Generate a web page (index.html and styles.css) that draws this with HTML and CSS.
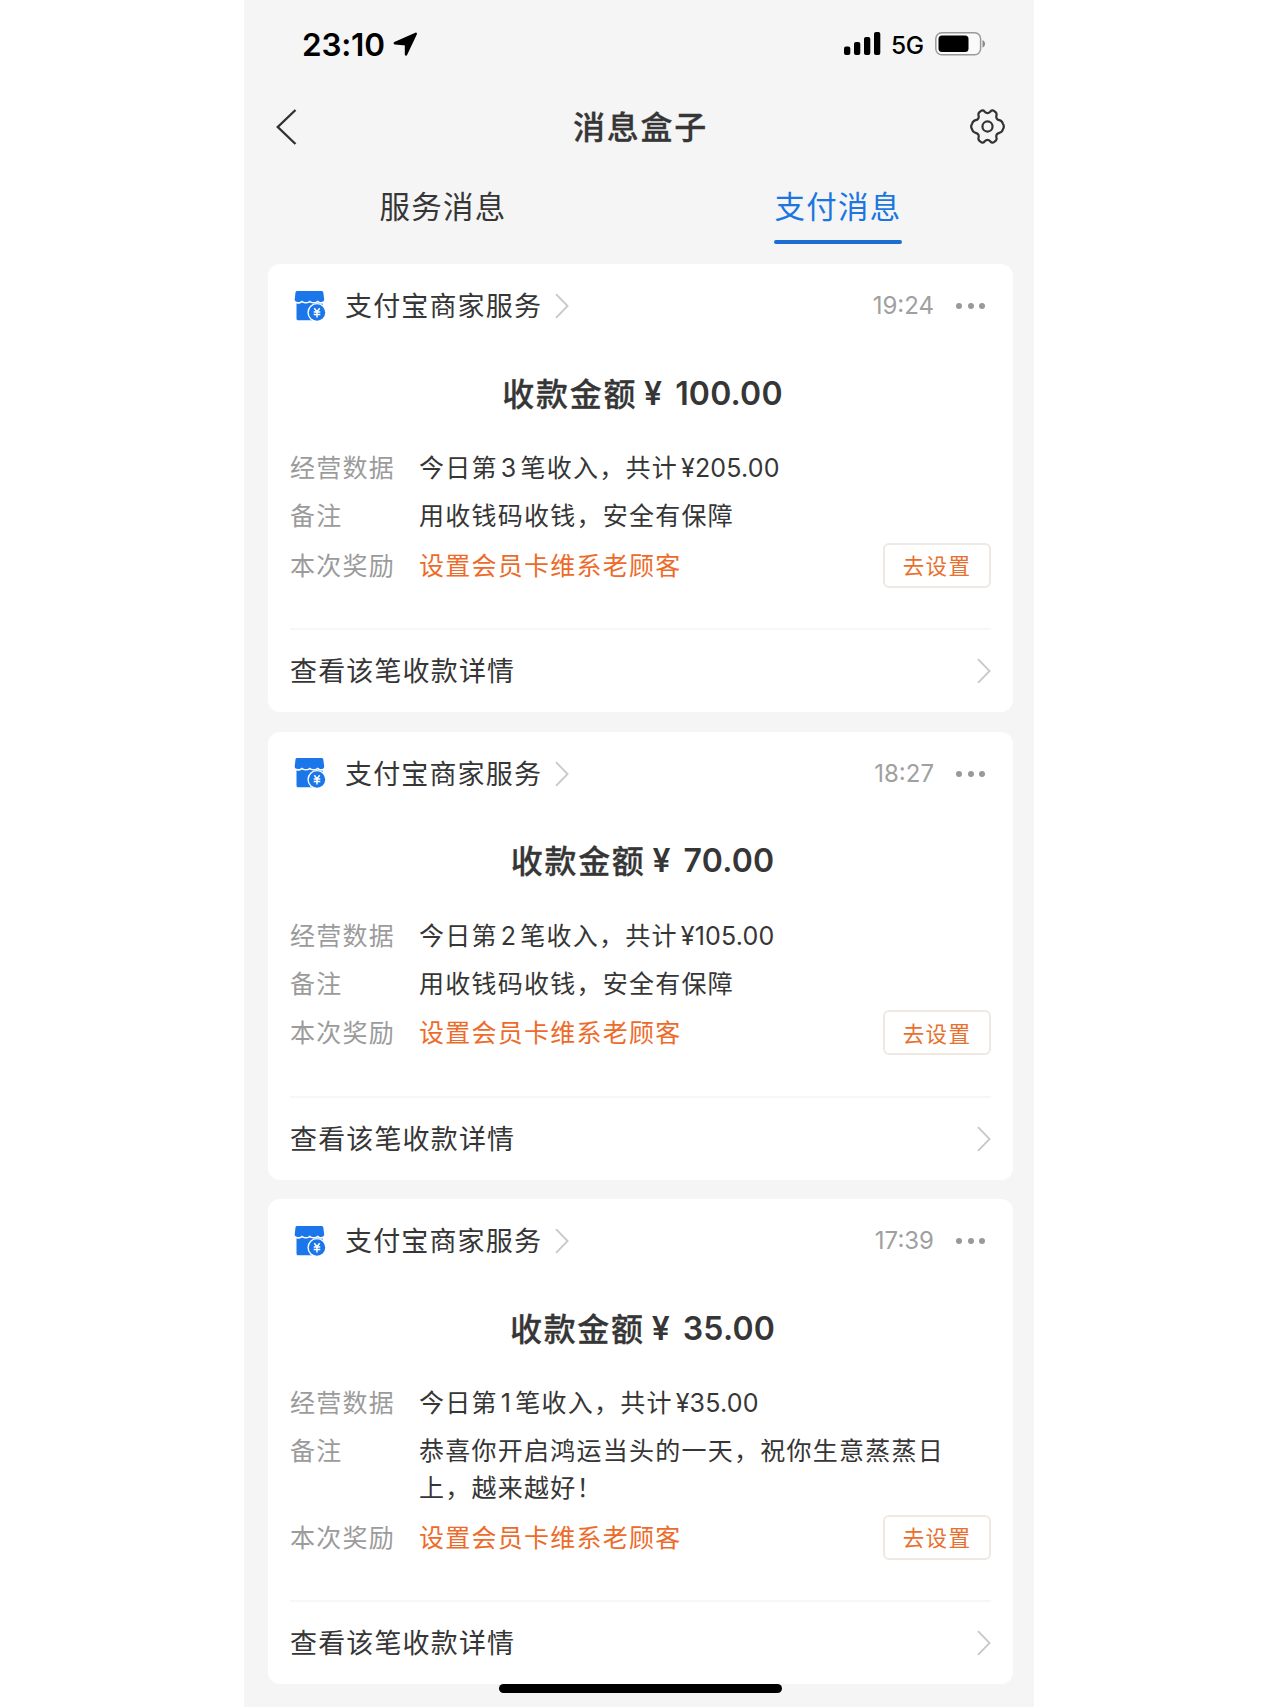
FILE: index.html
```html
<!DOCTYPE html>
<html lang="zh-CN">
<head>
<meta charset="utf-8">
<title>消息盒子</title>
<link rel="stylesheet" href="styles.css">
</head>
<body>
<svg class="sprite" aria-hidden="true">
  <symbol id="chevron" viewBox="0 0 14 26"><path d="M1 1.2 12.6 13 1 24.8" fill="none" stroke="currentColor" stroke-width="1.8"/></symbol>
  <symbol id="shop" viewBox="0 0 32 31">
    <path d="M3.2 0h24.2c1 0 1.7.5 1.9 1.500L30.200 8.500c.1 1.500-1.400 2.500-3 2.500-1.700 0-2.600-.8-3.600-1.600-1.200 1-2.200 1.600-3.900 1.600-1.600 0-2.700-.6-3.900-1.600-1.200 1-2.300 1.600-3.900 1.600-1.500 0-2.700-.6-3.900-1.600-1.200 1-2.300 1.600-4 1.600C2 11 .5 10 .7 8.500L1.500 1.500C1.700.5 2.300 0 3.200 0z" fill="#1b76ea"/>
    <path d="M2.500 12.600c2.200.3 4-.2 5.500-1.200 2.400 1.400 5.400 1.400 7.800 0 2.400 1.400 5.400 1.400 7.800 0 1.400 1 3.200 1.500 5 1.200V27c0 1.500-.7 2.300-2 2.300H4.300c-1.200 0-1.800-.7-1.800-1.800z" fill="#1b76ea"/>
    <circle cx="23" cy="21.500" r="9.600" fill="#fff"/>
    <circle cx="23" cy="21.500" r="8.200" fill="#1b76ea"/>
    <path d="m20.300 17.200 2.700 3.500 2.700-3.500M19.700 21h6.600M19.700 23.600h6.600M23 20.700v5.800" fill="none" stroke="#fff" stroke-width="1.500"/>
  </symbol>
</svg>
<main class="phone">
  <div class="status">
    <span class="clock">23:10</span>
    <svg class="locate" width="25" height="25" viewBox="0 0 25 25"><path d="M22.800 1.800 13 22.500V12.300L1.800 11.200z" stroke="#000" stroke-width="2.400" stroke-linejoin="round"/></svg>
    <svg class="signal" width="37" height="24" viewBox="0 0 37 24"><rect y="14.500" width="6.300" height="8.500" rx="2"/><rect x="10" y="10" width="6.300" height="13" rx="2"/><rect x="20" y="5" width="6.300" height="18" rx="2"/><rect x="30" width="6.300" height="23" rx="2"/></svg>
    <span class="network">5G</span>
    <svg class="battery" width="51" height="24" viewBox="0 0 51 24"><rect x=".8" y=".8" width="44.800" height="22" rx="6" fill="#fafafa" stroke="#9a9a9a" stroke-width="1.500"/><rect x="3.500" y="3.500" width="30" height="16.600" rx="3.500"/><path d="M47.500 8v7.600c3.400-1.600 3.400-6 0-7.600z" fill="#8a8a8a"/></svg>
  </div>
  <header class="nav">
    <svg class="back" width="22" height="38" viewBox="0 0 22 38"><path d="M20.500 2 2.800 19l17.700 17" fill="none" stroke="#333" stroke-width="2.400"/></svg>
    <h1>消息盒子</h1>
    <svg class="gear" width="35" height="35" viewBox="0 0 36 36"><g fill="none" stroke="#333" stroke-width="2.300" stroke-linejoin="round"><path d="M10.900 2.300C12.600.8 14 1.200 15.200 2.800c1.700 1.800 3.900 1.800 5.600 0C22 1.200 23.400.8 25.100 2.300c2.100 1.100 2.700 2.400 2.100 4.400-.6 2.400.6 4.300 3 4.800 2 .4 3 1.500 3.700 3.700.9 1.400.9 4.200 0 5.600-.7 2.200-1.700 3.300-3.700 3.700-2.400.5-3.600 2.400-3 4.800.6 2 0 3.300-2.100 4.400-1.700 1.500-3.100 1.100-4.300-.5-1.700-1.800-3.900-1.800-5.600 0-1.200 1.600-2.600 2-4.300.5-2.100-1.100-2.700-2.400-2.100-4.400.6-2.400-.6-4.300-3-4.800-2-.4-3-1.500-3.700-3.700-.9-1.400-.9-4.200 0-5.600.7-2.200 1.700-3.300 3.700-3.700 2.400-.5 3.600-2.400 3-4.800-.6-2 0-3.300 2.100-4.400z"/><circle cx="18" cy="18" r="5.200"/></g></svg>
  </header>
  <nav class="tabs">
    <span class="tab">服务消息</span>
    <span class="tab active">支付消息</span>
  </nav>

  <section class="card">
    <div class="head"><svg class="shop"><use href="#shop"/></svg><span class="name">支付宝商家服务</span><svg class="chev"><use href="#chevron"/></svg><time>19:24</time><span class="dots"><i></i><i></i><i></i></span></div>
    <h2>收款金额<span class="yen">¥</span><span class="num">100.00</span></h2>
    <dl>
      <div class="row"><dt>经营数据</dt><dd>今日第<b class="n">3</b>笔收入，共计<b class="sum">¥205.00</b></dd></div>
      <div class="row note"><dt>备注</dt><dd>用收钱码收钱，安全有保障</dd></div>
      <div class="row reward"><dt>本次奖励</dt><dd>设置会员卡维系老顾客</dd><button>去设置</button></div>
    </dl>
    <div class="foot"><span>查看该笔收款详情</span><svg class="chev"><use href="#chevron"/></svg></div>
  </section>

  <section class="card">
    <div class="head"><svg class="shop"><use href="#shop"/></svg><span class="name">支付宝商家服务</span><svg class="chev"><use href="#chevron"/></svg><time>18:27</time><span class="dots"><i></i><i></i><i></i></span></div>
    <h2>收款金额<span class="yen">¥</span><span class="num">70.00</span></h2>
    <dl>
      <div class="row"><dt>经营数据</dt><dd>今日第<b class="n">2</b>笔收入，共计<b class="sum">¥105.00</b></dd></div>
      <div class="row note"><dt>备注</dt><dd>用收钱码收钱，安全有保障</dd></div>
      <div class="row reward"><dt>本次奖励</dt><dd>设置会员卡维系老顾客</dd><button>去设置</button></div>
    </dl>
    <div class="foot"><span>查看该笔收款详情</span><svg class="chev"><use href="#chevron"/></svg></div>
  </section>

  <section class="card">
    <div class="head"><svg class="shop"><use href="#shop"/></svg><span class="name">支付宝商家服务</span><svg class="chev"><use href="#chevron"/></svg><time>17:39</time><span class="dots"><i></i><i></i><i></i></span></div>
    <h2>收款金额<span class="yen">¥</span><span class="num">35.00</span></h2>
    <dl>
      <div class="row"><dt>经营数据</dt><dd>今日第<b class="n">1</b>笔收入，共计<b class="sum">¥35.00</b></dd></div>
      <div class="row note"><dt>备注</dt><dd>恭喜你开启鸿运当头的一天，祝你生意蒸蒸日<br>上，越来越好！</dd></div>
      <div class="row reward"><dt>本次奖励</dt><dd>设置会员卡维系老顾客</dd><button>去设置</button></div>
    </dl>
    <div class="foot"><span>查看该笔收款详情</span><svg class="chev"><use href="#chevron"/></svg></div>
  </section>
  <div class="home"></div>
</main>
</body>
</html>
```

FILE: styles.css
```css
* { box-sizing: border-box; margin: 0; padding: 0; }
body { background: #fff; font-family: Inter, "Noto Sans CJK SC", sans-serif; color: #363636; }
.sprite { display: none; }
svg { display: block; flex: none; }
.phone { position: relative; width: 790px; height: 1707px; margin-left: 244px; padding: 0 21px 0 24px; background: #f5f5f5; overflow: hidden; white-space: nowrap; }

.status { display: flex; align-items: center; height: 88px; padding-left: 34px; color: #000; }
.clock { width: 91px; font-size: 31.5px; font-weight: 600; letter-spacing: -0.2px; }
.signal { margin-left: auto; }
.network { width: 33px; margin: 2px 11px 0 10px; font-size: 24.5px; font-weight: 500; letter-spacing: -0.5px; }
.battery { margin-right: 27px; }

.nav { display: flex; align-items: center; justify-content: space-between; height: 77px; padding: 0 8px 0 7px; }
.nav h1 { padding: 0 0 4px 14px; font-family: "Noto Sans CJK SC", sans-serif; font-size: 32px; font-weight: 500; letter-spacing: 1.8px; line-height: 48px; -webkit-text-stroke: 0.3px; }

.tabs { display: flex; height: 79px; margin-bottom: 20px; padding-left: 103px; gap: 259px; }
.tab { padding: 16px 0 0 8px; height: 79px; width: 136px; text-align: center; font: 400 30.5px/48px "Noto Sans CJK SC", sans-serif; letter-spacing: 1.3px; }
.active { position: relative; color: #1b76e0; }
.active::after { content: ""; position: absolute; left: 8px; bottom: 0; width: 128px; height: 4px; border-radius: 2px; background: #1b6fd0; }

.card { width: 745px; margin-bottom: 19.5px; padding: 0 22px; background: #fff; border-radius: 12px; }
.head { display: flex; align-items: center; height: 84px; padding: 0 5px 0 4px; }
.shop { width: 32px; height: 31px; margin-right: 19px; }
.name { width: 197px; padding-bottom: 2px; font: 400 27px/40px "Noto Sans CJK SC", sans-serif; letter-spacing: 1.15px; }
.chev { width: 14px; height: 26px; color: #c8c8c8; }
.name + .chev { margin-left: 13px; }
time { margin-left: auto; padding-bottom: 1px; font-size: 24px; color: #a0a0a0; }
.dots { display: flex; gap: 5.5px; margin: 0 1px 0 22px; }
.dots i { width: 6px; height: 6px; border-radius: 50%; background: #999; }

h2 { display: flex; align-items: center; justify-content: center; height: 90px; padding: 0 0 3px 4px; font: 500 32px/48px "Noto Sans CJK SC", sans-serif; letter-spacing: 1.7px; -webkit-text-stroke: 0.3px; }
.yen, .num { padding-top: 4px; font: 600 32px/48px Inter, sans-serif; letter-spacing: 0; -webkit-text-stroke: 0; }
.yen { margin: 0 13px 0 7px; }
.num { letter-spacing: 0.2px; }

dl { padding-top: 4px; }
.row { display: flex; height: 48px; padding: 6px 0; font: 400 25px/37px "Noto Sans CJK SC", sans-serif; letter-spacing: 1.25px; }
dt { width: 129px; color: #9b9b9b; }
dd { flex: 1; }
.row b { font: 400 25px/30px Inter, sans-serif; letter-spacing: 0.2px; }
.n { margin: 0 4px 0 3px; }
.sum { margin-left: 3px; }
.note { height: auto; }
.reward { height: 52px; padding: 3px 0; align-items: center; }
.reward dt, .reward dd { padding-bottom: 2px; }
.reward dd { color: #ed6b2a; }
button { width: 108px; height: 45px; border: 2px solid #f0e8e2; border-radius: 6px; background: #fff; color: #e8702f; font: 400 21.5px/40px "Noto Sans CJK SC", sans-serif; letter-spacing: 1.3px; }
.foot { display: flex; align-items: center; justify-content: space-between; height: 84px; margin-top: 37px; border-top: 2px solid #f7f7f7; font: 400 27px/40px "Noto Sans CJK SC", sans-serif; letter-spacing: 1.15px; }
.foot span { padding-bottom: 2px; }

.home { position: absolute; left: 255px; top: 1684px; width: 283px; height: 9px; border-radius: 5px; background: #000; }
```
